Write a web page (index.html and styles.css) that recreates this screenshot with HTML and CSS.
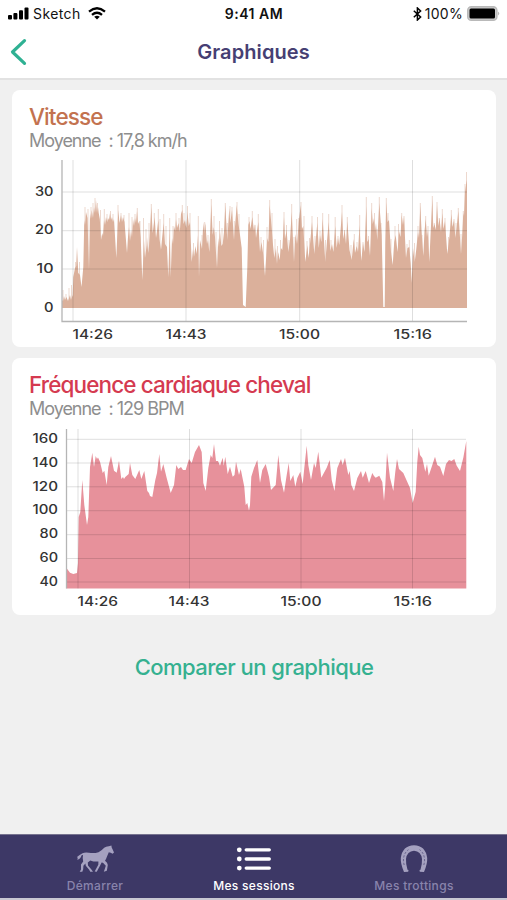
FILE: index.html
```html
<!DOCTYPE html>
<html lang="fr">
<head>
    <meta charset="UTF-8">
    <meta name="viewport" content="width=device-width, initial-scale=1.0">
    <title>Graphiques</title>
    <link rel="stylesheet" href="styles.css">
</head>
<body>
    <header>
        <div class="status-bar">
            <div class="status-left">
                <svg class="signal" width="21" height="13" viewBox="0 0 21 13">
                    <rect x="0" y="8" width="4" height="4.5" rx="1"/>
                    <rect x="5.4" y="6" width="4" height="6.5" rx="1"/>
                    <rect x="11" y="3.2" width="4" height="9.3" rx="1"/>
                    <rect x="16.5" y="0.5" width="4" height="12" rx="1"/>
                </svg>
                <span class="carrier">Sketch</span>
                <svg width="18" height="13" viewBox="0 0 18 13" fill="none" stroke="#000" stroke-width="2.3">
                    <path d="M1 4.6Q9 -2 17 4.6"/>
                    <path d="M4 7.9Q9 3.7 14 7.9"/>
                    <path d="M9 12.5L6.2 9.8Q9 7.8 11.8 9.8Z" fill="#000" stroke="none"/>
                </svg>
            </div>
            <div class="clock">9:41 AM</div>
            <div class="status-right">
                <svg width="9" height="14" viewBox="0 0 9 14" fill="none" stroke="#000" stroke-width="1.5">
                    <path d="M0.8 3.8L7.6 10L4.4 13V1L7.6 4L0.8 10.2"/>
                </svg>
                <span class="percent">100%</span>
                <svg width="33" height="15" viewBox="0 0 33 15">
                    <rect x="0.7" y="0.7" width="29.2" height="13.6" rx="3.6" fill="#ccc" stroke="#b9b9b9" stroke-width="1.4"/>
                    <rect x="2.5" y="2.5" width="25.5" height="10" rx="1.5"/>
                    <path d="M31.2 5.5Q33.2 7.5 31.2 9.5Z" fill="#aaa"/>
                </svg>
            </div>
        </div>
        <div class="title-bar">
            <svg class="back" width="17" height="28" viewBox="0 0 17 28">
                <path d="M14.5 2.7L2.5 14L14.5 25.3"/>
            </svg>
            <h1>Graphiques</h1>
        </div>
    </header>

    <main>
        <section class="card speed">
            <h2>Vitesse</h2>
            <p>Moyenne&nbsp; : 17,8 km/h</p>
            <svg class="chart" width="484" height="192" viewBox="12 155 484 192">
                <path class="spikes" d="M63 290V308M66 294V308M69 288V308M71.5 285V308M75.5 262V300M79.5 262V300M85 207V300M88 209V300M91 207V300M93 203V300M95 198V300M97.5 203V300M100.5 210V300M104.3 209V300M107 214V300M110.5 211V300M113 214V300M118 205V300M121 213V300M124 215V300M129 213V300M132 217V300M135 214V300M137.3 208V300M140 221V300M143.5 218V300M146 229V300M149 223V300M151.3 204V300M154.3 213V300M158.3 209V300M160 219V300M163.7 214V300M166 226V300M169.7 218V300M173 226V300M176 213V300M179 218V300M182.3 205V300M184 213V300M187.5 206V300M190 213V300M193.5 243V300M198.3 216V300M202 235V300M204.7 222V300M208 235V300M211.3 199V300M214 216V300M216 232V300M219.5 221V300M222 228V300M225.3 203V300M227.3 223V300M230 206V300M232 207V300M234.3 221V300M237 202V300M239 214V300M249 217V300M252.3 211V300M255 225V300M258.3 214V300M261 237V300M263.5 240V300M267 227V300M269.7 200V300M272 213V300M275 239V300M277.5 246V300M280.5 240V300M284 212V300M286.5 225V300M289 240V300M291.7 204V300M294 237V300M296.7 219V300M298.8 218V300M301 202V300M304 216V300M307 241V300M309.5 238V300M312 216V300M315 236V300M317.5 217V300M320 231V300M322.7 213V300M325.5 240V300M328.7 214V300M331 240V300M335.2 217V300M338 236V300M342 205V300M344.5 230V300M347.3 217V300M351 245V300M354.3 234V300M357 242V300M359.7 215V300M363 242V300M366.3 197V300M368.5 236V300M371.7 203V300M374.5 213V300M377 229V300M379.3 197V300M381 223V300M386.3 198V300M388 213V300M391 239V300M395 226V300M398.5 224V300M401.7 213V300M404 216V300M407 244V300M409.3 240V300M414.5 243V300M418 226V300M420.3 203V300M422 235V300M425.7 216V300M428 226V300M432.3 196V300M434.3 223V300M437 202V300M439.3 218V300M442.3 209V300M445 218V300M448.5 237V300M451.3 210V300M454 219V300M456 223V300M458.3 208V300M461 234V300M463.3 211V300M465 184V300M466.5 172V300"/>
                <path class="area" d="M62 308V300L63 301L64 296L65 300L66.5 297L68 301L70 295L71 300L72.7 295L73.3 277L75 268L76.2 266L77 247L78.3 273L80 275L81.5 287L83.3 267L84.3 220L85 225L86 212L87.5 218L89 270L90 213L91 219L91.7 210L93 218L94 207L95 213L96 200L97 213L98 207L98.7 213L99.8 219L101 240L102.2 233L103 236L104 220L105 225L106 217L107.2 222L108 218L109 220L110 213L111 220L112 217L113 222L114 219L116.3 258L117.4 232L118.3 210L119.5 223L121 215L122 222L123 217L124.5 222L127 253L128 237L129 227L130 241L131 230L132 237L133 219L134 226L135 218L136 223L137 211L138 224L139.3 221L140.7 237L142.3 280L144 240L145 258L146.7 245L147 237L148.2 253L149 246L150 230L151.3 207L152.7 233L154.7 217L156 238L157 231L158.3 220L159.5 239L161 250L162.2 237L163.7 223L165 244L167 247L168.3 277L169.7 229L170.7 277L172 238L173 244L174 226L175.2 231L176 219L177 228L178.5 223L179.8 232L181 214L182.3 210L183.5 224L185 220L186.2 228L187.5 212L188.8 226L190 222L191.7 262L193 249L194 257L195.4 246L196.7 254L198 235L199 277L200 240L202 249L203.3 222L204.2 233L205.3 223L207 244L208 240L209.3 252L211.3 204L212.7 235L213.8 227L215 237L217 268L218.2 238L219 247L220 231L221.3 246L222.7 244L224 232L225.3 205L227.3 240L229.3 208L230.3 223L232 210L234 240L235.5 220L236.7 205L238.5 224L240 235L241.7 248L243 305L245.7 307L247.3 268L248.3 225L249.5 221L250.5 229L252.3 217L254 231L255 224L256 238L258.3 222L260 252L261.5 242L263.3 255L265 276L267.3 238L268.3 242L269.7 205L271.7 228L273 245L274.3 258L276 248L277 264L278.3 252L279.5 260L281 248L282.3 250L284 217L285 239L286.6 230L288.3 252L290 240L291.7 212L294 262L295.4 234L297 244L298.8 222L300.7 205L302 229L303.3 226L305.3 262L307.4 245L308.5 258L310 244L312 222L314.3 254L315.7 240L317.3 223L318.8 248L320 235L321.3 242L322.7 219L325.3 262L327 241L328.7 222L330.3 251L332 244L333.4 252L335.2 226L336.7 248L338 238L339.2 245L340.5 231L342 212L343.3 239L344.7 230L346 244L347.3 221L349.5 250L351.7 260L353.7 239L355 253L356.7 246L358 252L359.5 225L361.3 261L363 243L364.5 252L366.3 206L367.3 242L368.7 239L370 256L371.7 208L372.8 224L374 218L375 231L376 223L377.3 240L379.3 203L381.7 235L383.3 307H384.7L385.3 242L386.3 202L387.5 222L389 220L391 252L392.7 265L394.2 242L395.7 235L397.5 252L399 231L400.5 237L401.7 215L403 225L404 217L406 258L407.5 248L409.3 247L410.7 263L411.7 283L413 248L414.7 262L416.3 249L418 232L419 238L420.3 205L421.5 230L423.3 256L424.5 231L425.7 219L427 237L428 230L429.3 262L430.5 236L432.3 199L433.3 228L434.5 224L435.8 230L437 205L438.3 226L439.5 218L441 232L442.3 213L443.5 229L445 221L447.3 254L449.4 237L451.3 214L452.5 227L454 220L455.4 238L456.7 227L458.3 211L459.6 231L461 254L462.2 235L463.3 213L464 216L465 192L466.3 183L467 180V308Z"/>
                <path class="grid" d="M62 192H467M62 230.7H467M62 269H467M73 160V321M186 160V321M299.7 160V321M412.5 160V321"/>
                <path class="axis" d="M62 160V321.5H467"/>
                <g class="labels y-labels">
                    <text x="53.5" y="195.8" textLength="18.5" lengthAdjust="spacingAndGlyphs">30</text>
                    <text x="53.5" y="234.3" textLength="18.5" lengthAdjust="spacingAndGlyphs">20</text>
                    <text x="53.5" y="272.7" textLength="17" lengthAdjust="spacingAndGlyphs">10</text>
                    <text x="53.5" y="311.5" textLength="9.5" lengthAdjust="spacingAndGlyphs">0</text>
                </g>
                <g class="labels">
                    <text x="72.5" y="338.7" textLength="40.5" lengthAdjust="spacingAndGlyphs">14:26</text>
                    <text x="165.5" y="338.7" textLength="41" lengthAdjust="spacingAndGlyphs">14:43</text>
                    <text x="279" y="338.7" textLength="41" lengthAdjust="spacingAndGlyphs">15:00</text>
                    <text x="393.5" y="338.7" textLength="38.5" lengthAdjust="spacingAndGlyphs">15:16</text>
                </g>
            </svg>
        </section>

        <section class="card heart">
            <h2>Fréquence cardiaque cheval</h2>
            <p>Moyenne&nbsp; : 129 BPM</p>
            <svg class="chart" width="484" height="192" viewBox="12 423 484 192">
                <path class="area" d="M66.5 588.5V568L70 572.7L73.3 574L77 573L78 563L78.7 517L80.3 512L82.3 480L84.3 505L87 525L88.3 517L90 467L92.3 452.7L94 467L95.7 456L97 459L98 457.5L100 461.7L102.7 473L104.3 470.7L106.7 485L108.3 467L111 456L114 470.7L116.7 472.7L119 460.7L121.3 479L123 477L124 479L125.3 477L128.7 474L130 463L132.3 475L135.3 479L139.3 470L141.3 479L144.3 471L147.3 491L149 493L150 496L152.3 497L155.3 480L157 473L159.3 454L161 471.7L163.3 464L166.7 478L170.7 493L174 485L176.3 465L178.3 469L181 467L183 470L185.7 470L189 459L191.7 463L195 452L199 445L201.7 452L203.3 483L205.7 491L208.3 468L210.7 455L212.3 458L214 444L216 461L218 461L220 465.7L222.7 457.7L223.7 465.7L225.3 456.7L227.7 474L230 466.7L232.7 476.7L234.5 475L236 461.7L239 475L240.7 469L244.3 486.7L245.7 505L247.3 503L249 510.7L250 505L251.3 476.7L254 468L257.3 460L260 483L262.3 470L265.7 464L269 476.7L271 490L275.7 485L278.3 455L281 480L284 492.7L286.7 475L288.7 463L290.3 481L293.3 475L295.3 486.7L297.3 478L300.3 471.7L302.7 484L304.3 468L306.7 445.7L308.3 465L311 480L314 463L315.7 468L318.3 451.7L321.3 477.7L326.7 467.7L329.7 460L331.7 480L334.5 491L337.3 468L341 459L342.7 465L345 457.7L348.3 475L349.7 471L351.3 485L354 491L357.3 478L361 471L362.7 477.7L365.7 471L369 483L372.3 473L374 476L375.7 477.7L379.3 475.7L382.3 482L384 501L385.3 485L387 452.7L390 477.7L393.3 491L395.3 471.7L397 459L399 469L403.3 473L410 488L412.7 503L415.7 491.7L417.3 461.7L418.7 446.7L420 455L422.3 458L425.3 471.7L427 464L428.7 475.7L432.3 465L435 456.7L437.3 465L440 466.7L443.3 476L446 464L449 460L451.5 461L454.3 459L456.7 465.7L460 471L463.3 457.7L466.3 441V588.5Z"/>
                <path class="grid" d="M66.5 439.3H466M66.5 463H466M66.5 486.8H466M66.5 510.7H466M66.5 534.7H466M66.5 558.5H466M66.5 582H466M78 429V588.5M189.5 429V588.5M301 429V588.5M412.5 429V588.5"/>
                <path class="axis" d="M66.5 429V588.5"/>
                <g class="labels y-labels">
                    <text x="58" y="442.8" textLength="25.5" lengthAdjust="spacingAndGlyphs">160</text>
                    <text x="58" y="466.8" textLength="25.5" lengthAdjust="spacingAndGlyphs">140</text>
                    <text x="58" y="490.5" textLength="25.5" lengthAdjust="spacingAndGlyphs">120</text>
                    <text x="58" y="514.3" textLength="25.5" lengthAdjust="spacingAndGlyphs">100</text>
                    <text x="58" y="538" textLength="18.5" lengthAdjust="spacingAndGlyphs">80</text>
                    <text x="58" y="562" textLength="18.5" lengthAdjust="spacingAndGlyphs">60</text>
                    <text x="58" y="585.8" textLength="18.5" lengthAdjust="spacingAndGlyphs">40</text>
                </g>
                <g class="labels">
                    <text x="77.5" y="606" textLength="40.5" lengthAdjust="spacingAndGlyphs">14:26</text>
                    <text x="168.5" y="606" textLength="41" lengthAdjust="spacingAndGlyphs">14:43</text>
                    <text x="280.5" y="606" textLength="41" lengthAdjust="spacingAndGlyphs">15:00</text>
                    <text x="393.5" y="606" textLength="38.5" lengthAdjust="spacingAndGlyphs">15:16</text>
                </g>
            </svg>
        </section>

        <a class="compare" href="#">Comparer un graphique</a>
    </main>

    <nav>
        <a class="tab" href="#">
            <svg width="39" height="28" viewBox="0 0 39 28">
                <path d="M6.5 8.2Q9.5 6.8 13 7.8Q18 8.6 22.5 7.2Q26 5.5 28.2 2.8Q30 1.1 33 1.2L35.4 0.6L35.7 2.4Q36.8 4.5 38 7.5L36.6 8.8Q34.7 7.5 32.8 7.2Q31.8 9.5 30.8 12Q30 14.5 29 15.7L31 17.8Q32.4 20 31.4 22.5L30.8 25.8L27.8 26.7L28.6 24.6L29.8 20.8L27 17.8L25.6 17.5L24 20.8L21.8 24.8L20.8 26.8L18.7 26.5L20 24L22.3 19.7L22.4 16.5Q18 16.9 14.3 15.4L11.8 17.4L12 20.4L15.4 24.4L17 26.8H14.2L13.2 24.8L9.8 20.8L9.4 18.4L7.4 20.7L7.2 24.2L6.3 26.8H3.7L5 24.4L5 19.5L7.2 16.4Q6.3 13 7 10.3Q6 9.4 5.5 10.6Q4.8 14.2 1.2 14.8Q2.5 12.6 1 12Q3.5 9.7 6.5 8.2Z" fill="currentColor"/>
            </svg>
            <span>Démarrer</span>
        </a>
        <a class="tab active" href="#">
            <svg width="36" height="28" viewBox="0 0 36 28">
                <g fill="currentColor">
                    <circle cx="3.3" cy="4.8" r="2.4"/>
                    <circle cx="3.3" cy="14" r="2.4"/>
                    <circle cx="3.3" cy="23.1" r="2.4"/>
                </g>
                <path d="M10.2 4.8H33.3M10.2 14H33.3M10.2 23.1H33.3" stroke="currentColor" stroke-width="3.3" stroke-linecap="round"/>
            </svg>
            <span>Mes sessions</span>
        </a>
        <a class="tab trot" href="#">
            <svg width="28" height="28" viewBox="0 0 28 28">
                <path d="M4 27L8.2 26.8L8.5 25L7.5 24.7Q5.7 18.5 6 14Q7 6 14 5.7Q21 6 22 14Q22.3 18.5 20.5 24.7L19.5 25L19.8 26.8L24 27Q27.6 18.5 27.2 13Q25.5 0.5 14 0.2Q2.5 0.5 0.8 13Q0.4 18.5 4 27Z" fill="currentColor"/>
                <path d="M4.2 20Q2.7 15 4.2 10.5Q5.3 7 8.4 4.7M23.8 20Q25.3 15 23.8 10.5Q22.7 7 19.6 4.7" fill="none" stroke="#67628c" stroke-width="1" stroke-dasharray="2.2 1.6"/>
            </svg>
            <span>Mes trottings</span>
        </a>
    </nav>
</body>
</html>
```

FILE: styles.css
```css
* {
    box-sizing: border-box;
}
body {
    display: flex;
    flex-direction: column;
    height: 900px;
    margin: 0;
    font-family: Inter, "Liberation Sans", sans-serif;
    background-color: #f0f0f0;
    overflow: hidden;
}
header {
    height: 80px;
    background-color: #fff;
    border-bottom: 2px solid #e2e2e2;
}
.status-bar {
    display: grid;
    grid-template-columns: 1fr auto 1fr;
    align-items: center;
    height: 27px;
    padding: 0 7px 0 8px;
    font-size: 14px;
    color: #111;
}
.status-left, .status-right {
    display: flex;
    align-items: center;
}
.status-right {
    justify-content: flex-end;
}
.carrier {
    margin: 0 7px 0 4px;
    letter-spacing: 0.4px;
}
.clock {
    font-weight: 600;
    letter-spacing: 0.5px;
}
.percent {
    margin: 0 4px 0 3px;
    letter-spacing: 0.3px;
}
.title-bar {
    display: grid;
    grid-template-columns: 40px 1fr 40px;
    align-items: center;
    height: 50px;
}
.back {
    margin-left: 10px;
    fill: none;
    stroke: #2fb193;
    stroke-width: 3.2;
    stroke-linecap: round;
    stroke-linejoin: round;
}
h1 {
    margin: 0;
    font-size: 20px;
    font-weight: 600;
    letter-spacing: 0.1px;
    text-align: center;
    color: #463f73;
}
main {
    display: flex;
    flex-direction: column;
    flex: 1;
    gap: 11px;
    padding: 10px 11px 0 12px;
}
.card {
    display: flex;
    flex-direction: column;
    height: 257px;
    padding-top: 13px;
    background-color: #fff;
    border-radius: 8px;
}
.card h2 {
    margin: 0 0 0 17px;
    font-size: 22.5px;
    line-height: 27px;
    font-weight: 500;
    letter-spacing: -0.88px;
}
.card p {
    margin: 0 0 0 17px;
    font-size: 18px;
    line-height: 21px;
    letter-spacing: -1.03px;
    color: #8e8e8e;
}
.speed h2 {
    color: #c3724f;
}
.heart h2 {
    color: #d53a50;
}
.chart {
    display: block;
    flex-shrink: 0;
    margin-top: auto;
}
.speed .area {
    fill: #dbb09b;
}
.spikes {
    fill: none;
    stroke: #dbb09b;
    stroke-width: 0.9;
    opacity: 0.55;
}
.heart .area {
    fill: #e7919b;
}
.grid {
    fill: none;
    stroke: #000;
    stroke-opacity: 0.13;
}
.axis {
    fill: none;
    stroke: #b5b5b5;
    stroke-width: 1.3;
}
.labels {
    font-size: 12.5px;
    font-weight: 500;
    fill: #333;
}
.y-labels {
    text-anchor: end;
}
.compare {
    margin-top: 27px;
    font-size: 22px;
    line-height: 28px;
    font-weight: 500;
    letter-spacing: -0.52px;
    text-align: center;
    text-decoration: none;
    color: #35b190;
}
nav {
    display: grid;
    grid-template-columns: 190px 128px 189px;
    height: 66px;
    border-top: 1px solid #77738f;
    border-bottom: 2px solid #c9c8d2;
    background-color: #3d3866;
}
.tab {
    display: flex;
    flex-direction: column;
    align-items: center;
    padding-top: 10px;
    font-size: 12px;
    font-weight: 500;
    line-height: 16px;
    letter-spacing: 0.3px;
    text-decoration: none;
    color: #8984ac;
}
.tab span {
    margin-top: 5px;
}
.tab svg {
    color: #a5a1c0;
}
.active, .active svg {
    color: #fff;
}
.trot {
    padding-left: 3px;
}
```
